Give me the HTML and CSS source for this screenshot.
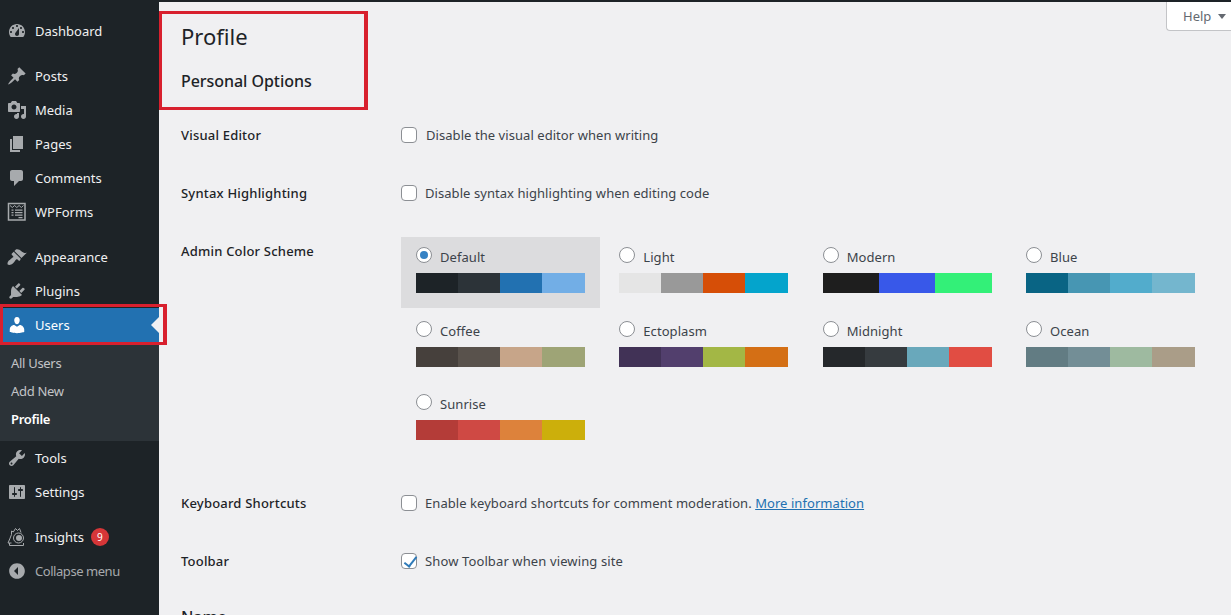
FILE: index.html
```html
<!DOCTYPE html>
<html lang="en">
<head>
<meta charset="utf-8">
<title>Profile</title>
<link rel="stylesheet" href="styles.css">
</head>
<body>
<div class="app">
  <nav class="sidebar">
    <ul class="menu">
      <li class="item"><svg class="ico" viewBox="0 0 20 20"><path fill-rule="evenodd" d="M3.76 16h12.48c1.1-1.37 1.76-3.11 1.76-5 0-4.42-3.58-8-8-8s-8 3.58-8 8c0 1.89.66 3.63 1.76 5zM10 4c.55 0 1 .45 1 1s-.45 1-1 1-1-.45-1-1 .45-1 1-1zM6 6c.55 0 1 .45 1 1s-.45 1-1 1-1-.45-1-1 .45-1 1-1zm8 0c.55 0 1 .45 1 1s-.45 1-1 1-1-.45-1-1 .45-1 1-1zm-5.37 5.55L12 7v6c0 1.1-.9 2-2 2s-2-.9-2-2c0-.57.24-1.08.63-1.45zM4 10c.55 0 1 .45 1 1s-.45 1-1 1-1-.45-1-1 .45-1 1-1zm12 0c.55 0 1 .45 1 1s-.45 1-1 1-1-.45-1-1 .45-1 1-1z"/></svg>Dashboard</li>
      <li class="sep"></li>
      <li class="item"><svg class="ico" viewBox="0 0 20 20"><path d="M10.44 3.02l1.82-1.82 6.36 6.35-1.83 1.82c-1.05-.68-2.48-.57-3.41.36l-.75.75c-.92.93-1.04 2.35-.35 3.41l-1.83 1.82-2.41-2.41-2.8 2.79c-.42.42-3.38 2.71-3.8 2.29s1.86-3.39 2.28-3.81l2.79-2.79L4.1 9.36l1.83-1.82c1.05.69 2.48.57 3.4-.36l.75-.75c.93-.92 1.05-2.35.36-3.41z"/></svg>Posts</li>
      <li class="item"><svg class="ico" viewBox="0 0 20 20"><path fill-rule="evenodd" d="M13 11V4c0-.55-.45-1-1-1h-1.67L9 1H5L3.67 3H2c-.55 0-1 .45-1 1v7c0 .55.45 1 1 1h10c.55 0 1-.45 1-1zM7 4.500c1.38 0 2.500 1.120 2.500 2.500S8.380 9.500 7 9.500 4.500 8.380 4.500 7 5.620 4.500 7 4.500zM14 6h5v10.500c0 1.380-1.120 2.500-2.500 2.500S14 17.880 14 16.500s1.120-2.500 2.500-2.500c.17 0 .34.02.5.05V9h-3V6zm-4 8.050V13h2v3.500c0 1.380-1.120 2.500-2.500 2.500S7 17.880 7 16.500 8.120 14 9.500 14c.17 0 .34.02.5.05z"/></svg>Media</li>
      <li class="item"><svg class="ico" viewBox="0 0 20 20"><path d="M6 15V2h10v13H6zm-1 1h8v2H3V5h2v11z"/></svg>Pages</li>
      <li class="item"><svg class="ico" viewBox="0 0 20 20"><path d="M5 2h9c1.100 0 2 .9 2 2v7c0 1.100-.9 2-2 2h-2l-5 5v-5H5c-1.100 0-2-.9-2-2V4c0-1.100.9-2 2-2z"/></svg>Comments</li>
      <li class="item"><svg class="ico" viewBox="0 0 20 20"><path class="line line-thick" d="M1.500 1.500h16.500v16.500H1.500z"/><path class="line" d="M3 3.500l2.300 2 2.300-2 2.200 2 2.300-2 2.300 2 2.100-2"/><path d="M4.500 7.500h2v1.200h-2zM8 7.500h7.500v1.200H8zM4.500 10h2v1.200h-2zM8 10h7.500v1.200H8zM4.500 12.500h2v1.200h-2zM8 12.500h7.500v1.200H8zM11.500 15h4v1.200h-4z"/></svg>WPForms</li>
      <li class="sep"></li>
      <li class="item"><svg class="ico" viewBox="0 0 20 20"><path d="M14.480 11.060L7.410 3.990l1.500-1.500c.5-.56 2.300-.47 3.510.32 1.210.8 1.430 1.280 2.910 2.100 1.180.64 2.450 1.260 4.450.85zm-.71.71L6.700 4.700 4.930 6.470c-.39.39-.39 1.020 0 1.410l1.060 1.060c.39.39.39 1.030 0 1.420-.6.6-1.430 1.110-2.210 1.690-.35.26-.7.53-1.010.84C1.430 13.230.5 15.250.5 16.130c0 .88.1 1.190.4 1.480.28.28.6.4 1.470.4s2.900-.94 4.200-2.280c.31-.31.58-.66.85-1.010.57-.78 1.080-1.610 1.690-2.210.39-.39 1.020-.39 1.410 0l1.060 1.060c.39.39 1.020.39 1.410 0z"/></svg>Appearance</li>
      <li class="item"><svg class="ico" viewBox="0 0 20 20"><path d="M13.110 4.360L9.870 7.600 8 5.730l3.240-3.240c.35-.34 1.050-.2 1.560.32.52.51.66 1.210.31 1.550zm-8 1.770l.91-1.120 9.010 9.010-1.190.84c-.71.71-2.630 1.160-3.820 1.160H6.140L4.900 17.260c-.59.59-1.540.59-2.120 0-.59-.58-.59-1.530 0-2.120l1.240-1.240v-3.880c0-1.130.4-3.190 1.090-3.890zm7.260 3.970l3.240-3.240c.34-.35 1.040-.21 1.550.31.52.51.66 1.210.31 1.550l-3.240 3.250z"/></svg>Plugins</li>
      <li class="item current"><svg class="ico" viewBox="0 0 20 20"><path d="M10 9.250c-2.270 0-2.730-3.440-2.730-3.440C7 4.020 7.820 2 9.970 2c2.160 0 2.980 2.020 2.710 3.810 0 0-.41 3.440-2.680 3.440zm0 2.570L12.720 10c2.390 0 4.520 2.330 4.520 4.530v2.490s-3.650 1.130-7.240 1.130c-3.650 0-7.240-1.130-7.240-1.130v-2.490c0-2.250 1.940-4.480 4.470-4.480z"/></svg>Users</li>
      <li>
        <ul class="submenu">
          <li>All Users</li>
          <li>Add New</li>
          <li class="active">Profile</li>
        </ul>
      </li>
      <li class="item"><svg class="ico" viewBox="0 0 20 20"><path fill-rule="evenodd" d="M16.680 9.770c-1.340 1.340-3.300 1.670-4.950.99l-5.410 6.520c-.99.99-2.590.99-3.580 0s-.99-2.590 0-3.570l6.520-5.420c-.68-1.650-.35-3.610.99-4.950 1.280-1.280 3.120-1.620 4.720-1.060l-2.890 2.890 2.820 2.820 2.860-2.870c.53 1.580.18 3.390-1.080 4.650zM3.810 16.210c.4.39 1.040.39 1.430 0 .4-.4.4-1.040 0-1.430-.39-.4-1.030-.4-1.430 0-.39.39-.39 1.030 0 1.430z"/></svg>Tools</li>
      <li class="item"><svg class="ico" viewBox="0 0 20 20"><path fill-rule="evenodd" d="M18 16V4c0-.55-.45-1-1-1H3c-.55 0-1 .45-1 1v12c0 .55.45 1 1 1h14c.55 0 1-.45 1-1zM8 11h1c.55 0 1 .45 1 1s-.45 1-1 1H8v1.500c0 .28-.22.5-.5.5s-.5-.22-.5-.5V13H6c-.55 0-1-.45-1-1s.45-1 1-1h1V5.500c0-.28.22-.5.5-.5s.5.22.5.5V11zm5-2h-1c-.55 0-1-.45-1-1s.45-1 1-1h1V5.500c0-.28.22-.5.5-.5s.5.22.5.5V7h1c.55 0 1 .45 1 1s-.45 1-1 1h-1v5.500c0 .28-.22.5-.5.5s-.5-.22-.5-.5V9z"/></svg>Settings</li>
      <li class="sep"></li>
      <li class="item"><svg class="ico" viewBox="0 0 20 20"><path class="line" d="M4.500 7.500V4l1.800 1L8.500 1.500 10.500 3.500 12.500 1.500 14 5.500M4.500 7.500C3.500 10.500 2 13.500 1 16h3.500M2.500 16v2.500h14V16"/><circle class="line" cx="11.500" cy="11" r="5"/><circle cx="12" cy="11" r="3"/></svg>Insights<span class="badge">9</span></li>
      <li class="item collapse"><svg class="ico" viewBox="0 0 20 20"><path fill-rule="evenodd" d="M10 2.160c4.330 0 7.840 3.510 7.840 7.840s-3.510 7.840-7.840 7.840S2.160 14.330 2.160 10 5.670 2.160 10 2.160zM11 14V6l-4 4z"/></svg>Collapse menu</li>
    </ul>
  </nav>

  <main class="content">
    <div class="help-tab">Help<span class="help-arrow"></span></div>
    <h1 class="title">Profile</h1>
    <h2 class="section">Personal Options</h2>

    <div class="row">
      <div class="label">Visual Editor</div>
      <label class="field field-wide"><input type="checkbox"><span>Disable the visual editor when writing</span></label>
    </div>
    <div class="row">
      <div class="label">Syntax Highlighting</div>
      <label class="field"><input type="checkbox"><span>Disable syntax highlighting when editing code</span></label>
    </div>
    <div class="row row-picker">
      <div class="label">Admin Color Scheme</div>
      <div class="picker">
        <div class="scheme selected">
          <label class="scheme-name"><input type="radio" name="scheme" checked><span>Default</span></label>
          <div class="swatches"><i style="background:#1d2327"></i><i style="background:#2c3338"></i><i style="background:#2271b1"></i><i style="background:#72aee6"></i></div>
        </div>
        <div class="scheme">
          <label class="scheme-name"><input type="radio" name="scheme"><span>Light</span></label>
          <div class="swatches"><i style="background:#e5e5e5"></i><i style="background:#999999"></i><i style="background:#d64e07"></i><i style="background:#04a4cc"></i></div>
        </div>
        <div class="scheme">
          <label class="scheme-name"><input type="radio" name="scheme"><span>Modern</span></label>
          <div class="swatches"><i style="background:#1e1e1e"></i><i style="background:#3858e9"></i><i style="background:#33f078"></i></div>
        </div>
        <div class="scheme">
          <label class="scheme-name"><input type="radio" name="scheme"><span>Blue</span></label>
          <div class="swatches"><i style="background:#096484"></i><i style="background:#4796b3"></i><i style="background:#52accc"></i><i style="background:#74b6ce"></i></div>
        </div>
        <div class="scheme">
          <label class="scheme-name"><input type="radio" name="scheme"><span>Coffee</span></label>
          <div class="swatches"><i style="background:#46403c"></i><i style="background:#59524c"></i><i style="background:#c7a589"></i><i style="background:#9ea476"></i></div>
        </div>
        <div class="scheme">
          <label class="scheme-name"><input type="radio" name="scheme"><span>Ectoplasm</span></label>
          <div class="swatches"><i style="background:#413256"></i><i style="background:#523f6d"></i><i style="background:#a3b745"></i><i style="background:#d46f15"></i></div>
        </div>
        <div class="scheme">
          <label class="scheme-name"><input type="radio" name="scheme"><span>Midnight</span></label>
          <div class="swatches"><i style="background:#25282b"></i><i style="background:#363b3f"></i><i style="background:#69a8bb"></i><i style="background:#e14d43"></i></div>
        </div>
        <div class="scheme">
          <label class="scheme-name"><input type="radio" name="scheme"><span>Ocean</span></label>
          <div class="swatches"><i style="background:#627c83"></i><i style="background:#738e96"></i><i style="background:#9ebaa0"></i><i style="background:#aa9d88"></i></div>
        </div>
        <div class="scheme">
          <label class="scheme-name"><input type="radio" name="scheme"><span>Sunrise</span></label>
          <div class="swatches"><i style="background:#b43c38"></i><i style="background:#cf4944"></i><i style="background:#dd823b"></i><i style="background:#ccaf0b"></i></div>
        </div>
      </div>
    </div>
    <div class="row">
      <div class="label">Keyboard Shortcuts</div>
      <label class="field"><input type="checkbox"><span>Enable keyboard shortcuts for comment moderation. <a class="more" href="#">More information</a></span></label>
    </div>
    <div class="row">
      <div class="label">Toolbar</div>
      <label class="field"><input type="checkbox" checked><span class="toolbar-text">Show Toolbar when viewing site</span></label>
    </div>
    <h2 class="section section-name">Name</h2>
  </main>

  <div class="mark mark-title"></div>
  <div class="mark mark-users"></div>
</div>
</body>
</html>
```
FILE: styles.css
```css
* { box-sizing: border-box; }
html, body { margin: 0; padding: 0; height: 100%; }
body { font-family: "Noto Sans", "Open Sans", sans-serif; font-size: 13px; line-height: 20px; background: #f0f0f2; color: #3c434a; overflow: hidden; }
ul { list-style: none; margin: 0; padding: 0; }

.app { position: relative; display: flex; height: 615px; overflow: hidden; border-top: 2px solid #1d2327; }

.sidebar { flex: 0 0 159px; background: #1d2327; padding-top: 14px; margin-top: -2px; height: 617px; }
.item { position: relative; display: flex; align-items: center; height: 34px; color: #f0f0f1; }
.ico { flex: 0 0 20px; width: 20px; height: 20px; margin: 0 8px 0 7px; fill: #a7aaad; }
.ico .line { fill: none; stroke: #a7aaad; stroke-width: 1; }
.ico .line-thick { stroke-width: 1.500; }
.sep { height: 11px; }
.current { background: #2271b1; color: #fff; }
.current .ico { fill: #fff; }
.current::after { content: ""; position: absolute; right: 0; top: 9px; border: 8px solid transparent; border-right-color: #f0f0f2; border-left-width: 0; }
.submenu { background: #2c3338; padding: 7px 0 8px; color: #c3c4c7; letter-spacing: -.3px; }
.submenu li { height: 28px; line-height: 28px; padding-left: 11px; }
.submenu .active { color: #fff; font-weight: 600; }
.badge { width: 18px; height: 18px; margin-left: 7px; border-radius: 50%; background: #d63638; color: #fff; font-size: 10px; line-height: 18px; text-align: center; }
.collapse { color: #a7aaad; letter-spacing: -.45px; }

.content { flex: 1; padding: 0 0 0 22px; min-width: 0; }
.help-tab { float: right; display: flex; align-items: center; width: 65px; height: 29px; padding-left: 16px; background: #fff; border: 1px solid #c3c4c7; border-top: 0; border-right: 0; border-radius: 0 0 0 4px; color: #646970; }
.help-arrow { margin-left: 7px; border-style: solid; border-width: 5px 4px 0; border-color: #646970 transparent transparent; }
.title { margin: 0; padding-top: 19px; font-size: 22px; font-weight: 400; line-height: 30px; color: #1d2327; }
.section { margin: 19px 0 14px; font-size: 16px; font-weight: 500; line-height: 22px; color: #1d2327; letter-spacing: -.05px; }
.section-name { margin: 16px 0 0; }

.row { display: flex; padding: 19px 0; letter-spacing: .06px; }
.row-picker { padding-top: 15px; }
.row-picker .label { padding-top: 4px; }
.label { flex: 0 0 220px; font-weight: 500; color: #1d2327; letter-spacing: .2px; }
.field { display: flex; align-items: center; height: 20px; }
.field span { margin-left: 8px; }
.field-wide span { margin-left: 9px; }
.field .toolbar-text { letter-spacing: .12px; }
.more { color: #2271b1; }

input { appearance: none; flex: none; width: 16px; height: 16px; margin: 0; background: #fff; border: 1px solid #8c8f94; }
input[type="checkbox"] { border-radius: 4px; position: relative; }
input[type="checkbox"]:checked::after { content: ""; position: absolute; left: 5px; top: 0; width: 5px; height: 11px; border: solid #2f7ab8; border-width: 0 2.500px 2.500px 0; transform: rotate(38deg); }
input[type="radio"] { border-radius: 50%; position: relative; }
input[type="radio"]:checked::after { content: ""; position: absolute; left: 3px; top: 3px; width: 8px; height: 8px; border-radius: 50%; background: #3582c4; }

.picker { display: grid; grid-template-columns: repeat(4, 199px); column-gap: 4.330px; row-gap: 2.500px; align-content: start; }
.scheme { height: 71px; padding: 10px 15px 0; }
.selected { background: #dcdcde; }
.scheme-name { display: flex; align-items: flex-start; height: 26px; }
.scheme-name span { margin-left: 8px; line-height: 20px; }
.swatches { display: flex; height: 20px; }
.swatches i { flex: 1 1 0; }
.swatches i:last-child:nth-child(4) { flex: 0 0 43px; }

.mark { position: absolute; border: 3px solid #d8202e; pointer-events: none; }
.mark-title { left: 159px; top: 9px; width: 209px; height: 99px; border-right-width: 4px; }
.mark-users { left: 0; top: 302px; width: 167px; height: 41px; border-right-width: 4px; }
```
